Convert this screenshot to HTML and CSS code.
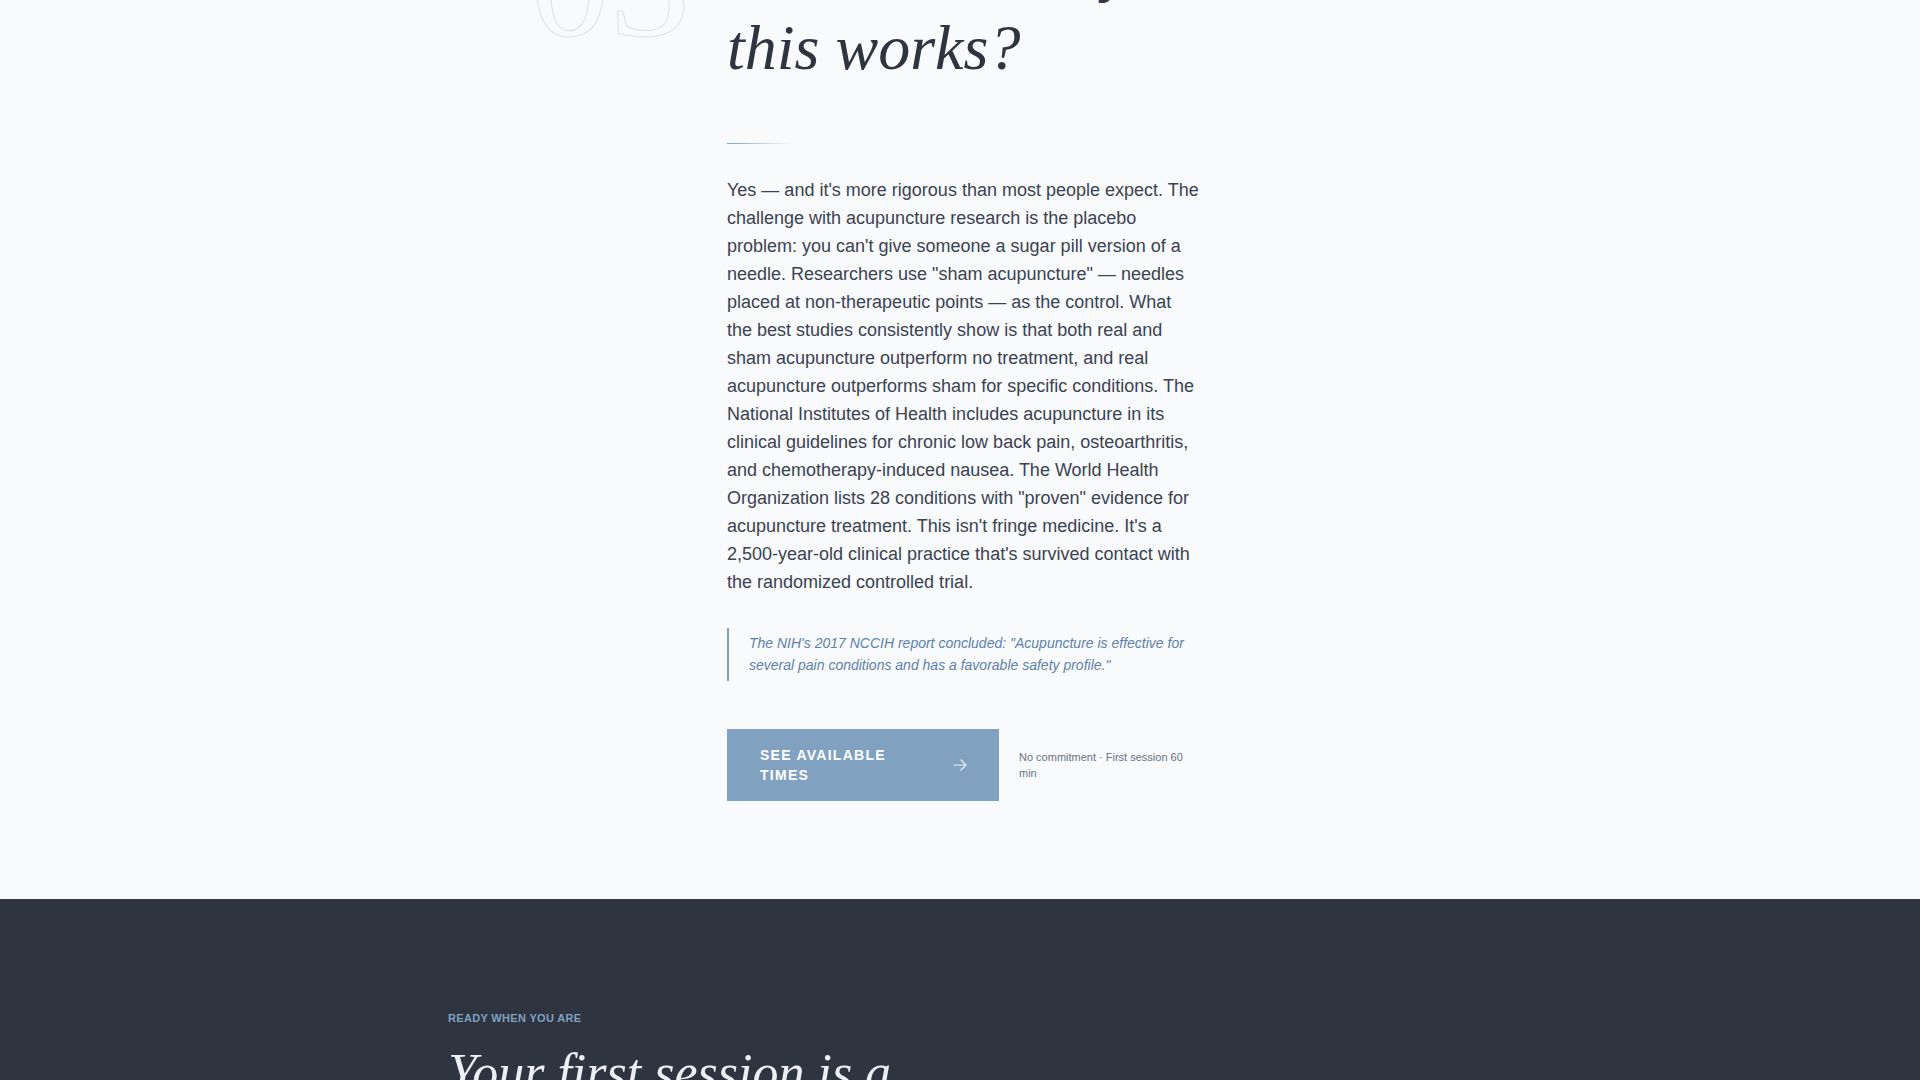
FILE: index.html
```html
<!DOCTYPE html>
<html lang="en">
<head>
    <meta charset="UTF-8">
    <meta name="viewport" content="width=device-width, initial-scale=1.0">
    <title>Acupuncture - Common Questions</title>
    <link rel="stylesheet" href="styles.css">
</head>
<body>
    <section class="faq">
        <article class="faq-item">
            <span class="faq-num">03</span>
            <div class="faq-body">
                <h2 class="faq-question">Is there real science that says this works?</h2>
                <div class="faq-rule"></div>
                <p class="faq-answer">Yes — and it's more rigorous than most people expect. The challenge with acupuncture research is the placebo problem: you can't give someone a sugar pill version of a needle. Researchers use "sham acupuncture" — needles placed at non-therapeutic points — as the control. What the best studies consistently show is that both real and sham acupuncture outperform no treatment, and real acupuncture outperforms sham for specific conditions. The National Institutes of Health includes acupuncture in its clinical guidelines for chronic low back pain, osteoarthritis, and chemotherapy-induced nausea. The World Health Organization lists 28 conditions with "proven" evidence for acupuncture treatment. This isn't fringe medicine. It's a 2,500-year-old clinical practice that's survived contact with the randomized controlled trial.</p>
                <blockquote class="faq-quote">The NIH's 2017 NCCIH report concluded: "Acupuncture is effective for several pain conditions and has a favorable safety profile."</blockquote>
                <div class="cta-row">
                    <a href="#book" class="btn">
                        <span>See available times</span>
                        <svg width="14" height="12" viewBox="0 0 14 12" fill="none" stroke="currentColor" stroke-width="1.2" stroke-linecap="round" stroke-linejoin="round">
                            <path d="M1 6h12M8 1l5 5-5 5"/>
                        </svg>
                    </a>
                    <span class="cta-note">No commitment · First session 60 min</span>
                </div>
            </div>
        </article>
    </section>

    <section class="closing" id="book">
        <div class="closing-inner">
            <p class="eyebrow">Ready when you are</p>
            <h2 class="closing-title">Your first session is a conversation.</h2>
        </div>
    </section>
</body>
</html>
```

FILE: styles.css
```css
body {
    margin: 0;
    background-color: #f8fafc;
    color: #3b4252;
    font-family: "Liberation Sans", Arial, sans-serif;
}

/* question block */
.faq {
    max-width: 860px;
    margin: -152px auto 0;
    padding-bottom: 98px;
}
.faq-item {
    display: grid;
    grid-template-columns: 197px 473px;
}
.faq-num {
    margin-top: 53px;
    font-family: "Liberation Serif", "Times New Roman", serif;
    font-size: 160px;
    line-height: 1;
    color: transparent;
    -webkit-text-stroke: 1px #dde3eb;
}
.faq-question {
    margin: 0 0 55px;
    font-family: "Liberation Serif", "Times New Roman", serif;
    font-style: italic;
    font-weight: 400;
    font-size: 64px;
    line-height: 1.25;
    color: #2e3440;
}
.faq-rule {
    width: 64px;
    height: 1px;
    background: linear-gradient(to right, #81a1c1, rgba(129, 161, 193, 0));
}
.faq-answer {
    margin: 32px 0 0;
    font-size: 18px;
    line-height: 28px;
}
.faq-quote {
    margin: 32px 0 0;
    padding: 4px 0 4px 20px;
    border-left: 2px solid #81a1c1;
    font-style: italic;
    font-size: 14px;
    line-height: 1.6;
    color: #5e81ac;
}

/* call to action */
.cta-row {
    display: flex;
    align-items: center;
    gap: 20px;
    margin-top: 48px;
}
.btn {
    display: flex;
    align-items: center;
    justify-content: space-between;
    gap: 24px;
    flex: 0 0 272px;
    box-sizing: border-box;
    padding: 16px 32px 16px 33px;
    background-color: #81a1c1;
    color: #ffffff;
    text-decoration: none;
    text-transform: uppercase;
    font-weight: bold;
    font-size: 14px;
    line-height: 20px;
    letter-spacing: 0.09em;
}
.btn svg {
    flex-shrink: 0;
    opacity: 0.85;
}
.cta-note {
    max-width: 170px;
    font-size: 11px;
    line-height: 16px;
    color: #6b7280;
}

/* closing band */
.closing {
    background-color: #2e3440;
    padding: 113px 0 120px;
}
.closing-inner {
    max-width: 1024px;
    margin: 0 auto;
}
.eyebrow {
    margin: 0 0 18px;
    font-size: 11px;
    font-weight: bold;
    letter-spacing: 0.03em;
    text-transform: uppercase;
    color: #81a1c1;
}
.closing-title {
    max-width: 640px;
    margin: 0;
    font-family: "Liberation Serif", "Times New Roman", serif;
    font-style: italic;
    font-weight: 400;
    font-size: 52px;
    line-height: 1.2;
    color: #eceff4;
}
```
